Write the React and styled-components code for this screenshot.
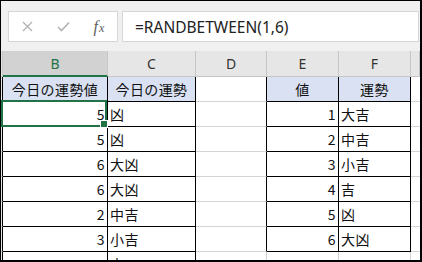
import styled, { createGlobalStyle } from 'styled-components'

const GREEN = '#217346'
const GRID = '#d4d4d4'
const INK = '#000'

const GlobalStyle = createGlobalStyle`
  html, body { margin: 0; padding: 0; background: #fff; }
  body { font-family: "Noto Sans", "Noto Sans CJK JP", sans-serif; }
`

const Frame = styled.div`
  width: 422px;
  height: 262px;
  box-sizing: border-box;
  border: solid #000;
  border-width: 1px 2px 2px 1px;
  display: flex;
  flex-direction: column;
  overflow: hidden;
  background: #fff;
`

const FormulaBar = styled.div`
  height: 50px;
  flex: none;
  box-sizing: border-box;
  background: #f0f0f0;
  display: flex;
  align-items: flex-start;
  gap: 4px;
  padding: 10px 1px 0 7px;
`

const Box = styled.div`
  height: 31px;
  box-sizing: border-box;
  background: #fff;
  border: 1px solid #d6d6d6;
  display: flex;
  align-items: center;
`

const ButtonBox = styled(Box)`
  width: 110px;
  flex: none;
`

const Slot = styled.div`
  width: 36px;
  height: 100%;
  display: flex;
  align-items: center;
  justify-content: center;
`

const Fx = styled.span`
  font-family: "Liberation Serif", serif;
  font-style: italic;
  font-size: 16px;
  color: #5e5e5e;
  sub {
    font-size: 12px;
    vertical-align: 0;
    margin-left: 1px;
  }
`

const FormulaBox = styled(Box)`
  flex: 1;
  padding-left: 12px;
  font-size: 15.5px;
  color: #222;
`

const Columns = `grid-template-columns: 2px 105px 88px 71px 72px 72px 1fr;`

const HeaderRow = styled.div`
  display: grid;
  ${Columns}
  height: 26px;
  flex: none;
`

const ColHead = styled.div`
  box-sizing: border-box;
  background: ${p => (p.$active ? '#d2d2d2' : '#e6e6e6')};
  color: ${p => (p.$active ? GREEN : '#333')};
  border-right: 1px solid #c6c6c6;
  border-bottom: ${p => (p.$active ? `2px solid ${GREEN}` : '1px solid #c6c6c6')};
  font-size: 14px;
  display: flex;
  align-items: center;
  justify-content: center;
`

const Row = styled.div`
  display: grid;
  ${Columns}
  height: 25px;
  flex: none;
`

const Cell = styled.div`
  position: relative;
  box-sizing: border-box;
  border-right: ${p => (p.$right ? `1px solid ${p.$right}` : 'none')};
  border-bottom: 1px solid ${p => p.$bottom};
  background: ${p => p.$fill || '#fff'};
  font-family: "Noto Sans CJK JP", sans-serif;
  font-size: 14px;
  letter-spacing: 0.4px;
  line-height: 24px;
  color: #111;
  white-space: nowrap;
  text-align: ${p => p.$align || 'left'};
  padding: ${p => (p.$align === 'right' ? '0 2px 0 0' : p.$align === 'center' ? '0' : '0 0 0 2px')};
`

const RowHead = styled.div`
  box-sizing: border-box;
  background: #e6e6e6;
  border-right: 1px solid ${INK};
  border-bottom: 1px solid #c6c6c6;
`

const Selection = styled.div`
  position: absolute;
  left: -2px;
  right: 0;
  top: -2px;
  bottom: -1px;
  border: 2px solid ${GREEN};
  z-index: 1;
`

const Handle = styled.div`
  position: absolute;
  right: -2px;
  bottom: -2px;
  width: 6px;
  height: 6px;
  background: ${GREEN};
  outline: 1px solid #fff;
  z-index: 2;
`

const rows = [
  { b: '今日の運勢値', c: '今日の運勢', e: '値', f: '運勢', head: true },
  { b: 5, c: '凶', e: 1, f: '大吉', selected: true },
  { b: 5, c: '凶', e: 2, f: '中吉' },
  { b: 6, c: '大凶', e: 3, f: '小吉' },
  { b: 6, c: '大凶', e: 4, f: '吉' },
  { b: 2, c: '中吉', e: 5, f: '凶' },
  { b: 3, c: '小吉', e: 6, f: '大凶' },
  { b: 4, c: '吉' },
]

function CrossIcon() {
  return (
    <svg width="11" height="11" viewBox="0 0 11 11">
      <path d="M1 1 L10 10 M10 1 L1 10" stroke="#b3b3b3" strokeWidth="1.4" fill="none" />
    </svg>
  )
}

function CheckIcon() {
  return (
    <svg width="13" height="11" viewBox="0 0 13 11">
      <path d="M1 6 L4.5 9.5 L12 1.5" stroke="#b3b3b3" strokeWidth="1.6" fill="none" />
    </svg>
  )
}

function SheetRow({ row }) {
  const inEF = row.e !== undefined
  const fill = row.head ? '#d9e1f2' : null
  const numAlign = row.head ? 'center' : 'right'
  const txtAlign = row.head ? 'center' : 'left'
  const efBorder = inEF ? INK : GRID
  return (
    <Row>
      <RowHead />
      <Cell $right={INK} $bottom={INK} $fill={fill} $align={numAlign}>
        {row.b}
        {row.selected && (
          <Selection>
            <Handle />
          </Selection>
        )}
      </Cell>
      <Cell $right={INK} $bottom={INK} $fill={fill} $align={txtAlign}>{row.c}</Cell>
      <Cell $right={efBorder} $bottom={GRID} />
      <Cell $right={efBorder} $bottom={efBorder} $fill={fill} $align={numAlign}>{row.e}</Cell>
      <Cell $right={efBorder} $bottom={efBorder} $fill={fill} $align={txtAlign}>{row.f}</Cell>
      <Cell $bottom={GRID} />
    </Row>
  )
}

export default function App() {
  return (
    <>
      <GlobalStyle />
      <Frame>
        <FormulaBar>
          <ButtonBox>
            <Slot><CrossIcon /></Slot>
            <Slot><CheckIcon /></Slot>
            <Slot><Fx>f<sub>x</sub></Fx></Slot>
          </ButtonBox>
          <FormulaBox>=RANDBETWEEN(1,6)</FormulaBox>
        </FormulaBar>
        <HeaderRow>
          <ColHead />
          <ColHead $active>B</ColHead>
          <ColHead>C</ColHead>
          <ColHead>D</ColHead>
          <ColHead>E</ColHead>
          <ColHead>F</ColHead>
          <ColHead />
        </HeaderRow>
        {rows.map((row, i) => (
          <SheetRow key={i} row={row} />
        ))}
      </Frame>
    </>
  )
}
